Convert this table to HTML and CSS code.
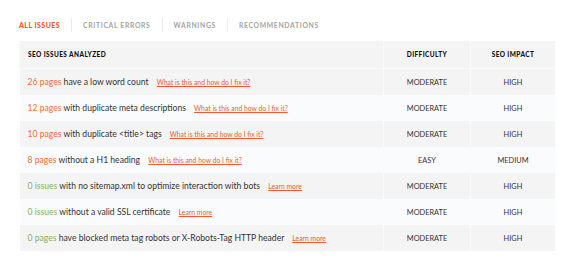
FILE: index.html
```html
<!DOCTYPE html>
<html>

<head>
    <title>SEO Issues</title>
    <link rel="stylesheet" href="styles.css">
</head>

<body>
    <div class="issues">
        <div class="tabs">
            <a class="tab active">All issues</a>
            <a class="tab">Critical errors</a>
            <a class="tab">Warnings</a>
            <a class="tab">Recommendations</a>
        </div>
        <table class="issue-table">
            <thead>
                <tr>
                    <th class="col-issue">SEO issues analyzed</th>
                    <th class="col-diff">Difficulty</th>
                    <th class="col-impact">SEO impact</th>
                </tr>
            </thead>
            <tbody>
                <tr>
                    <td><span class="count bad">26 pages</span> have a low word count <a class="help">What is this and how do I fix it?</a></td>
                    <td>MODERATE</td>
                    <td>HIGH</td>
                </tr>
                <tr>
                    <td><span class="count bad">12 pages</span> with duplicate meta descriptions <a class="help">What is this and how do I fix it?</a></td>
                    <td>MODERATE</td>
                    <td>HIGH</td>
                </tr>
                <tr>
                    <td><span class="count bad">10 pages</span> with duplicate &lt;title&gt; tags <a class="help">What is this and how do I fix it?</a></td>
                    <td>MODERATE</td>
                    <td>HIGH</td>
                </tr>
                <tr>
                    <td><span class="count bad">8 pages</span> without a H1 heading <a class="help">What is this and how do I fix it?</a></td>
                    <td>EASY</td>
                    <td>MEDIUM</td>
                </tr>
                <tr>
                    <td><span class="count good">0 issues</span> with no sitemap.xml to optimize interaction with bots <a class="help">Learn more</a></td>
                    <td>MODERATE</td>
                    <td>HIGH</td>
                </tr>
                <tr>
                    <td><span class="count good">0 issues</span> without a valid SSL certificate <a class="help">Learn more</a></td>
                    <td>MODERATE</td>
                    <td>HIGH</td>
                </tr>
                <tr>
                    <td><span class="count good">0 pages</span> have blocked meta tag robots or X-Robots-Tag HTTP header <a class="help">Learn more</a></td>
                    <td>MODERATE</td>
                    <td>HIGH</td>
                </tr>
            </tbody>
        </table>
    </div>
</body>

</html>
```

FILE: styles.css
```css
body {
    margin: 0;
    background-color: #fff;
    font-family: Lato, "Liberation Sans", sans-serif;
    color: #333;
}

.issues {
    padding: 18px 21px 0 19px;
}

.tabs {
    display: flex;
    align-items: center;
    height: 14px;
    margin-bottom: 9px;
}

.tab {
    font-size: 6.8px;
    font-weight: bold;
    letter-spacing: 0.67px;
    text-transform: uppercase;
    color: #a3a3a3;
    padding: 0 11px;
    border-left: 1px solid #ececec;
    line-height: 14px;
}

.tab:first-child {
    padding-left: 0;
    border-left: none;
}

.tab.active {
    font-size: 7px;
    font-weight: 900;
    letter-spacing: 0.45px;
    color: #f15a24;
}

.issue-table {
    width: 536px;
    border-collapse: collapse;
    table-layout: fixed;
}

.issue-table th {
    height: 27px;
    background-color: #f4f4f5;
    font-size: 6.5px;
    font-weight: 900;
    letter-spacing: 0.4px;
    text-transform: uppercase;
    color: #111;
    border-left: 1px solid #fafafa;
    border-bottom: 1px solid #fbfbfb;
    padding: 0;
}

.issue-table th.col-issue {
    text-align: left;
    padding-left: 8px;
    width: 355px;
}

.issue-table th.col-diff {
    width: 86px;
}

.issue-table td {
    height: 26px;
    padding: 0;
    font-size: 7.4px;
    text-align: center;
    color: #333;
    border-left: 1px solid #fafafa;
}

.issue-table td:first-child {
    text-align: left;
    padding-left: 8px;
    border-left: none;
    font-size: 8.6px;
}

.issue-table tbody tr:nth-child(odd) {
    background-color: #f4f4f5;
}

.issue-table tbody tr:nth-child(even) {
    background-color: #fafbfc;
}

.count.bad {
    color: #f26b3a;
}

.count.good {
    color: #86b064;
}

.help {
    margin-left: 6px;
    font-size: 6.8px;
    color: #f05a30;
    text-decoration: underline;
}
```
